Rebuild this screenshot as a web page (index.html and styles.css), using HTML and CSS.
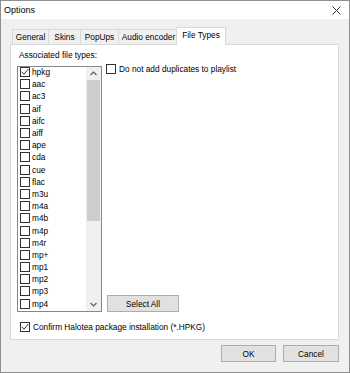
FILE: index.html
```html
<!DOCTYPE html>
<html>

<head>
  <meta charset="utf-8">
  <link rel="stylesheet" href="styles.css">
</head>

<body>
<div class="window">
  <div class="titlebar">
    <span class="title">Options</span>
    <svg class="close" width="9" height="9" viewBox="0 0 9 9">
      <path d="M0.5 0.5 L8.5 8.5 M8.5 0.5 L0.5 8.5" stroke="#333" stroke-width="1" fill="none" />
    </svg>
  </div>

  <div class="dialog">
    <div class="tabs">
      <div class="tab tab-general">General</div>
      <div class="tab tab-skins">Skins</div>
      <div class="tab tab-popups">PopUps</div>
      <div class="tab tab-audio">Audio encoder</div>
      <div class="tab tab-files active">File Types</div>
    </div>

    <div class="panel">
      <div class="label">Associated file types:</div>

      <div class="row">
        <div class="listbox">
          <div class="items">
            <div class="item"><span class="box checked"><svg width="8" height="8" viewBox="0 0 8 8"><path d="M0.8 3.8 L3 6.2 L7.4 1" stroke="#333" stroke-width="1" fill="none" /></svg></span>hpkg</div>
            <div class="item"><span class="box"></span>aac</div>
            <div class="item"><span class="box"></span>ac3</div>
            <div class="item"><span class="box"></span>aif</div>
            <div class="item"><span class="box"></span>aifc</div>
            <div class="item"><span class="box"></span>aiff</div>
            <div class="item"><span class="box"></span>ape</div>
            <div class="item"><span class="box"></span>cda</div>
            <div class="item"><span class="box"></span>cue</div>
            <div class="item"><span class="box"></span>flac</div>
            <div class="item"><span class="box"></span>m3u</div>
            <div class="item"><span class="box"></span>m4a</div>
            <div class="item"><span class="box"></span>m4b</div>
            <div class="item"><span class="box"></span>m4p</div>
            <div class="item"><span class="box"></span>m4r</div>
            <div class="item"><span class="box"></span>mp+</div>
            <div class="item"><span class="box"></span>mp1</div>
            <div class="item"><span class="box"></span>mp2</div>
            <div class="item"><span class="box"></span>mp3</div>
            <div class="item"><span class="box"></span>mp4</div>
          </div>
          <div class="scrollbar">
            <div class="arrow">
              <svg width="7" height="5" viewBox="0 0 7 5"><path d="M0.5 4 L3.5 1 L6.5 4" stroke="#606060" stroke-width="1.2" fill="none" /></svg>
            </div>
            <div class="track">
              <div class="thumb"></div>
            </div>
            <div class="arrow">
              <svg width="7" height="5" viewBox="0 0 7 5"><path d="M0.5 1 L3.5 4 L6.5 1" stroke="#606060" stroke-width="1.2" fill="none" /></svg>
            </div>
          </div>
        </div>

        <div class="side">
          <div class="check"><span class="box"></span>Do not add duplicates to playlist</div>
          <button class="btn btn-select">Select All</button>
        </div>
      </div>

      <div class="check confirm"><span class="box checked"><svg width="8" height="8" viewBox="0 0 8 8"><path d="M0.8 3.8 L3 6.2 L7.4 1" stroke="#333" stroke-width="1" fill="none" /></svg></span>Confirm Halotea package installation (*.HPKG)</div>
    </div>

    <div class="footer">
      <button class="btn btn-ok">OK</button>
      <button class="btn btn-cancel">Cancel</button>
    </div>
  </div>
</div>
</body>

</html>
```

FILE: styles.css
```css
* {
  box-sizing: border-box;
}

body {
  margin: 0;
  padding: 0;
  font-family: "Liberation Sans", Arial, sans-serif;
  font-size: 8.3px;
  color: #000;
  background: #fff;
}

.window {
  width: 350px;
  height: 373px;
  border: 1px solid #8f8f8f;
  background: #f0f0f0;
  display: flex;
  flex-direction: column;
}

.titlebar {
  height: 18px;
  background: #fff;
  display: flex;
  align-items: center;
  justify-content: space-between;
  padding: 0 8px 0 3px;
}

.title {
  font-size: 9px;
}

.close {
  display: block;
}

.dialog {
  flex: 1;
  padding: 8px 10px 0 9px;
}

.tabs {
  display: flex;
  align-items: flex-end;
  height: 17px;
  padding-left: 2px;
}

.tab {
  height: 15px;
  line-height: 14px;
  text-align: center;
  border-top: 1px solid #d9d9d9;
  border-left: 1px solid #d9d9d9;
  background: #f0f0f0;
}

.tab-general { width: 36px; }
.tab-skins { width: 32px; }
.tab-popups { width: 38px; }
.tab-audio { width: 60px; }

.tab.active {
  position: relative;
  z-index: 1;
  width: 50px;
  height: 18px;
  line-height: 15px;
  margin-left: -2px;
  margin-bottom: -1px;
  background: #fff;
  border: 1px solid #d9d9d9;
  border-bottom: none;
}

.panel {
  height: 296px;
  background: #fff;
  border: 1px solid #d9d9d9;
  padding: 5px 6px 0 6px;
}

.label {
  height: 11px;
  line-height: 11px;
  padding-left: 2px;
  margin-bottom: 5px;
}

.row {
  display: flex;
  height: 246px;
}

.listbox {
  width: 85px;
  height: 246px;
  border: 1px solid #828790;
  display: flex;
}

.items {
  flex: 1;
  margin-top: -1px;
  padding-left: 2px;
  overflow: hidden;
}

.item {
  height: 12.2px;
  display: flex;
  align-items: center;
  white-space: nowrap;
}

.box {
  width: 10px;
  height: 10px;
  border: 1px solid #333;
  background: #fff;
  margin-right: 2px;
  flex-shrink: 0;
  display: flex;
  align-items: center;
  justify-content: center;
}

.box svg {
  display: block;
}

.scrollbar {
  width: 15px;
  display: flex;
  flex-direction: column;
  background: #f0f0f0;
}

.arrow {
  height: 13px;
  display: flex;
  align-items: center;
  justify-content: center;
}

.track {
  flex: 1;
}

.thumb {
  height: 141px;
  margin: 0 1px;
  background: #cdcdcd;
}

.side {
  flex: 1;
  display: flex;
  flex-direction: column;
  justify-content: space-between;
  align-items: flex-start;
  padding-left: 4px;
  margin-top: -2px;
}

.check {
  display: flex;
  align-items: center;
  white-space: nowrap;
}

.check .box {
  margin-right: 3px;
}

.confirm {
  margin-top: 10px;
  padding-left: 3px;
}

.btn {
  font-family: "Liberation Sans", Arial, sans-serif;
  font-size: 8.3px;
  color: #000;
  background: #e1e1e1;
  border: 1px solid #adadad;
  height: 17px;
  padding: 0;
}

.btn-select {
  width: 72px;
  margin-left: 1px;
}

.footer {
  display: flex;
  justify-content: flex-end;
  gap: 7px;
  padding-top: 5px;
}

.btn-ok {
  width: 55px;
}

.btn-cancel {
  width: 56px;
}
```
